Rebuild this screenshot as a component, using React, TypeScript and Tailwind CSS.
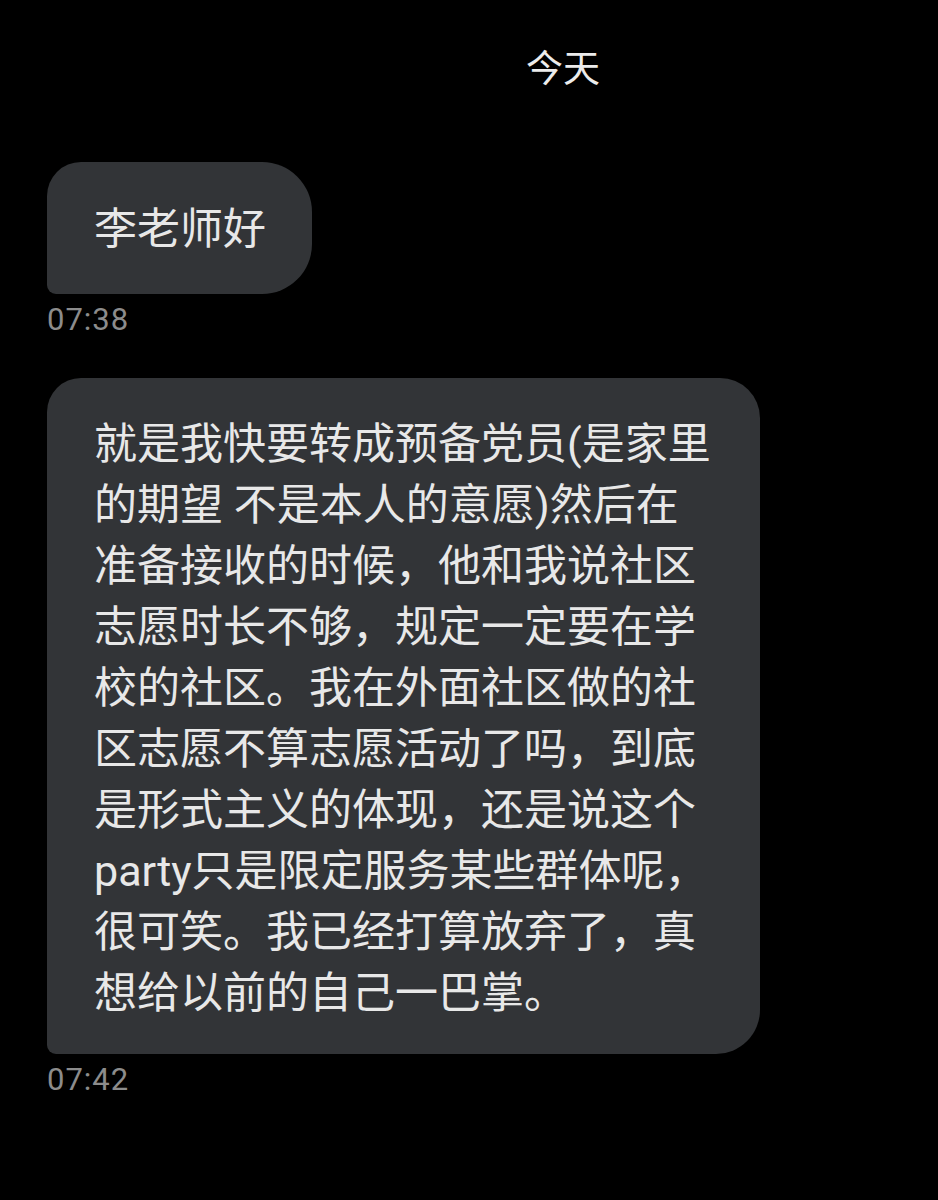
import React from 'react';

const font = { fontFamily: 'Roboto, "Noto Sans CJK SC", sans-serif' };

const lines = [
  '就是我快要转成预备党员(是家里',
  '的期望 不是本人的意愿)然后在',
  '准备接收的时候，他和我说社区',
  '志愿时长不够，规定一定要在学',
  '校的社区。我在外面社区做的社',
  '区志愿不算志愿活动了吗，到底',
  '是形式主义的体现，还是说这个',
  'party只是限定服务某些群体呢，',
  '很可笑。我已经打算放弃了，真',
  '想给以前的自己一巴掌。',
];

const Time = ({ children }: { children: React.ReactNode }) => (
  <div className="mt-[7px] text-[31px] leading-[37px] tracking-[1px] text-[#8c8c8c]">{children}</div>
);

export default function App() {
  return (
    <div className="min-h-[1200px] w-[938px] bg-black pl-[47px] pt-[44px]" style={font}>
      {/* date divider */}
      <div className="ml-[479px] text-[37px] leading-[52px] text-[#ececec]">今天</div>

      {/* first message */}
      <div className="mt-[66px] inline-block rounded-tl-[34px] rounded-tr-[50px] rounded-br-[50px] rounded-bl-[9px] bg-[#323437] pl-[47px] pr-[46px] pt-[37px] pb-[34px] text-[43px] leading-[61px] text-[#e8e8e8]">
        李老师好
      </div>
      <Time>07:38</Time>

      {/* second message */}
      <div className="mt-[40px] w-[713px] rounded-tl-[34px] rounded-tr-[40px] rounded-br-[44px] rounded-bl-[9px] bg-[#323437] pl-[47px] pt-[36px] pb-[30px] text-[43px] leading-[61px] text-[#e8e8e8]">
        {lines.map((l) => (
          <div key={l} className="whitespace-pre">{l}</div>
        ))}
      </div>
      <Time>07:42</Time>
    </div>
  );
}
